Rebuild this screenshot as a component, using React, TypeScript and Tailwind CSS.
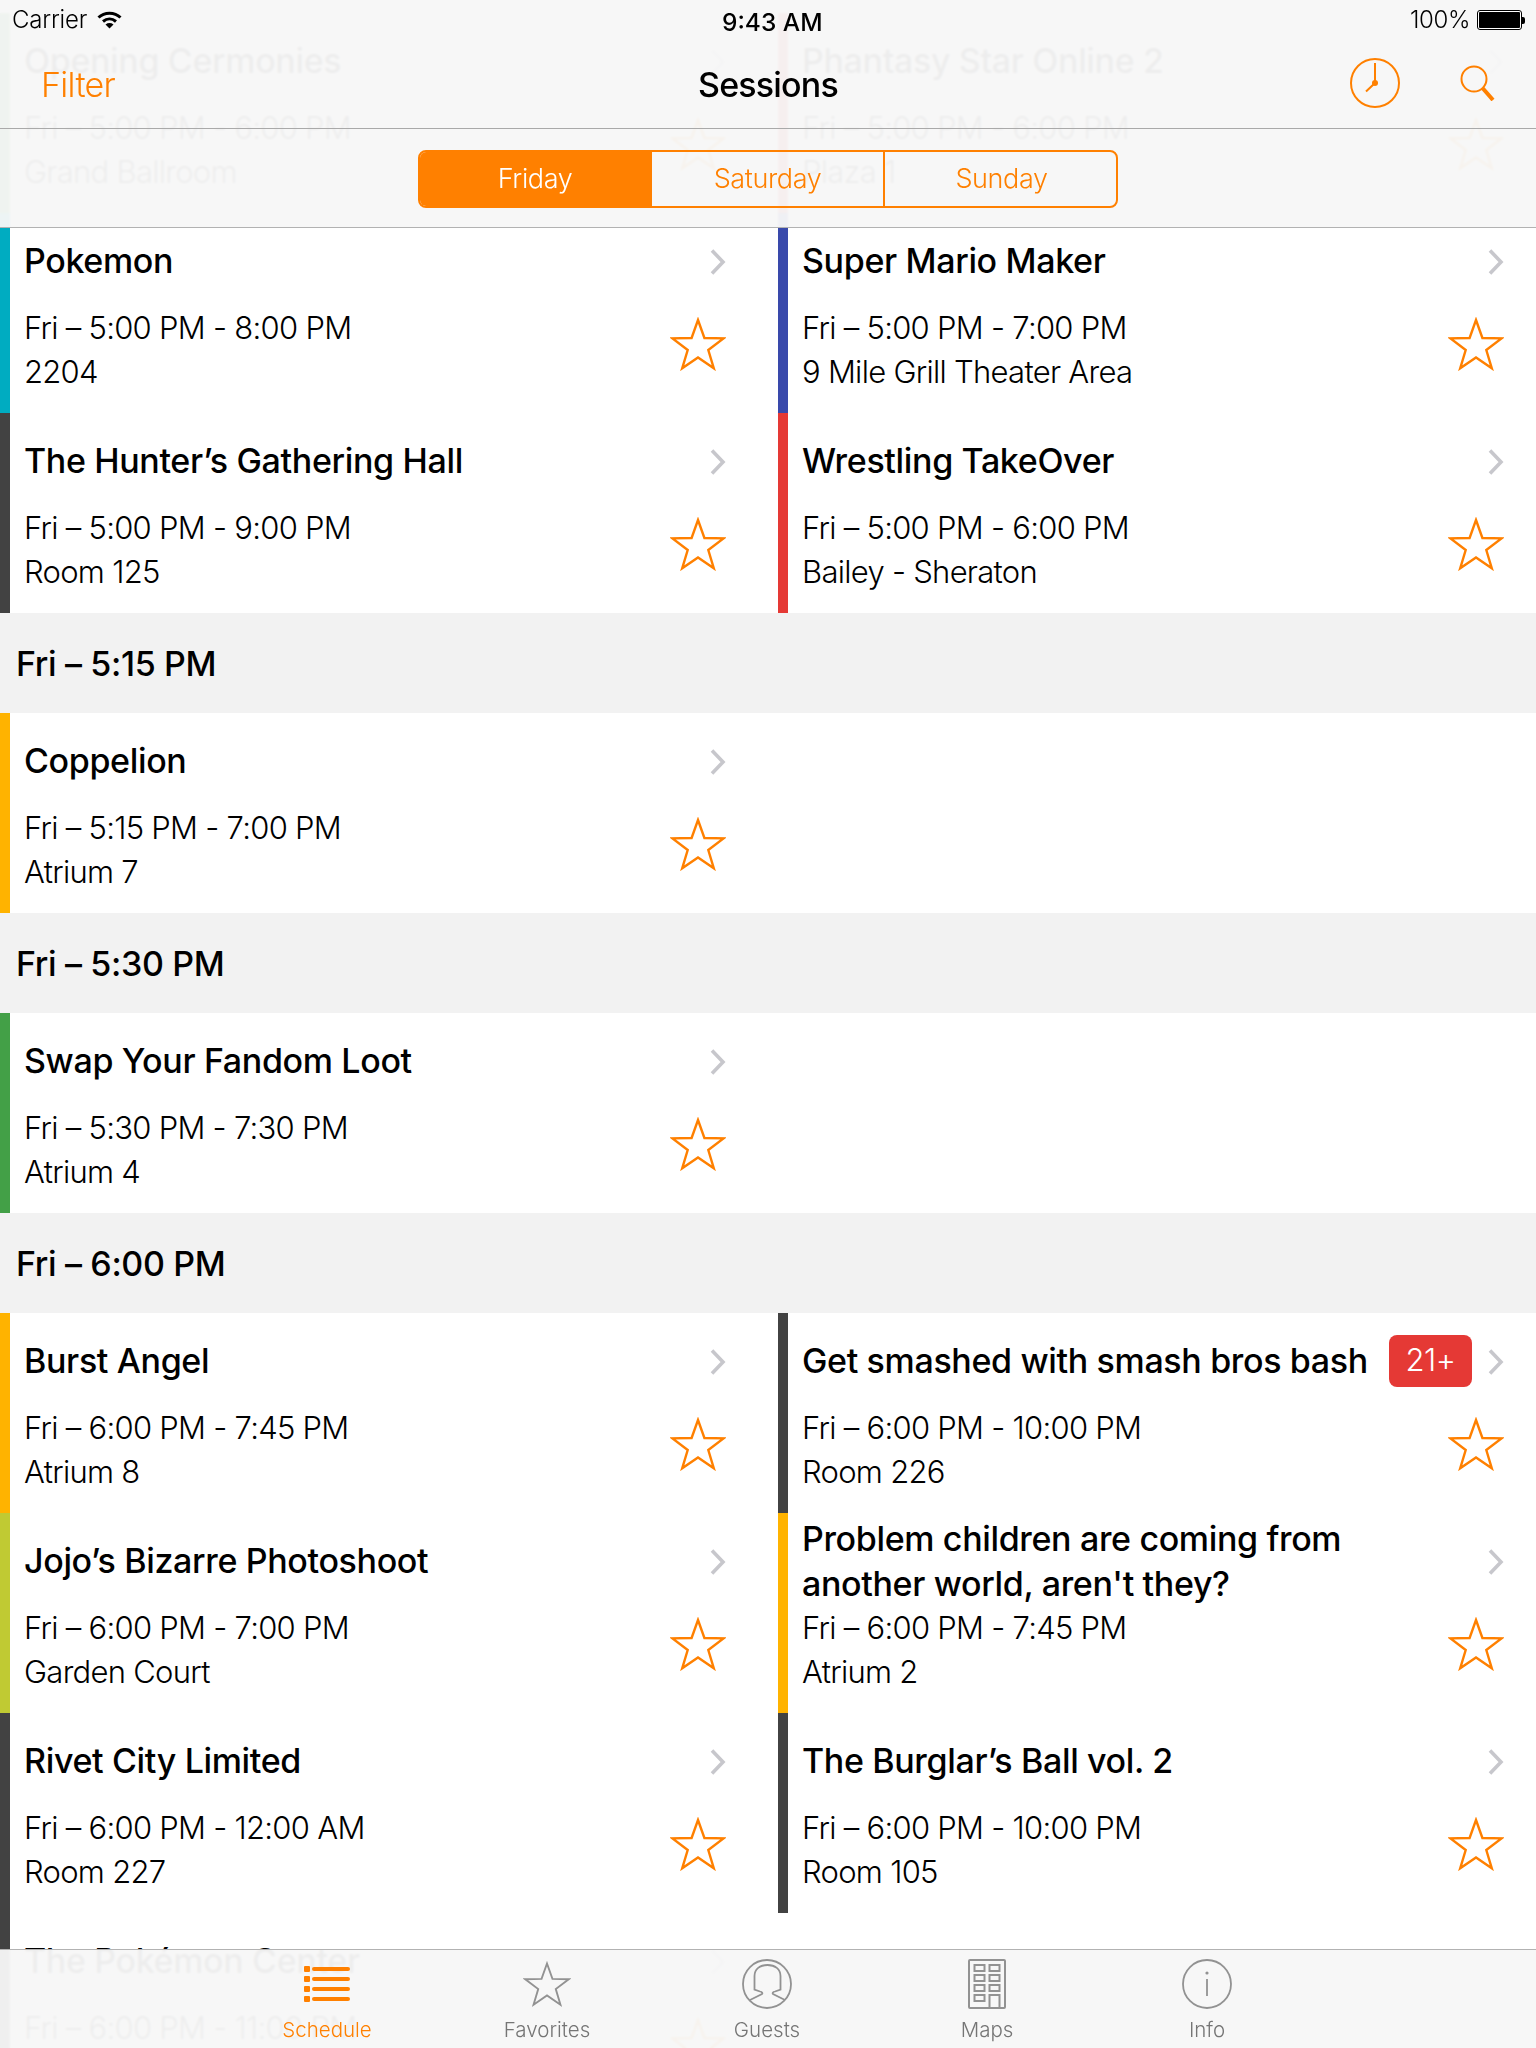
import React from 'react';

interface Session {
  title: React.ReactNode;
  time: string;
  room: string;
  bar: string;
  badge?: string;
}

type Cell = Session | null;

const font = "font-['Inter','Liberation_Sans',sans-serif]";

const StarIcon: React.FC<{ className?: string; stroke?: string; width?: number }> = ({ className, stroke = '#ff8000', width = 2.4 }) => (
  <svg viewBox="0 0 56 54" className={className} fill="none">
    <path
      d="M28 3 L34.4 21 L53.5 21.4 L38.3 33 L43.8 51.3 L28 40.5 L12.2 51.3 L17.7 33 L2.5 21.4 L21.6 21 Z"
      stroke={stroke}
      strokeWidth={width}
      strokeLinejoin="miter"
    />
  </svg>
);

const Chevron = () => (
  <svg viewBox="0 0 16 26" className="mt-[3px] h-[26px] w-[16px] shrink-0" fill="none" stroke="#c7c7cc" strokeWidth="3.6">
    <path d="M2 1.5 L13 13 L2 24.5" />
  </svg>
);

const SessionRow: React.FC<{ session: Session }> = ({ session }) => (
  <div className="flex h-[200px] bg-white">
    <div className={`w-[10px] shrink-0 ${session.bar}`} />
    <div className="flex-1 min-w-0 pl-[14px] pr-[32px] pt-[2px]">
      <div className="flex h-[91px] items-center">
        <div className="flex-1 min-w-0 text-[34px] leading-[45px] font-medium tracking-[-0.35px] text-black">{session.title}</div>
        {session.badge && (
          <div className="mr-[16px] flex h-[52px] w-[83px] items-center justify-center rounded-[8px] bg-[#e53935] text-[31px] font-light tracking-[-0.5px] text-white">
            {session.badge}
          </div>
        )}
        <Chevron />
      </div>
      <div className="flex items-start justify-between">
        <div className="text-[31px] leading-[44px] font-light tracking-[-0.72px] text-black">
          <div>{session.time}</div>
          <div>{session.room}</div>
        </div>
        <StarIcon className="mt-[11px] h-[54px] w-[56px]" />
      </div>
    </div>
  </div>
);

const SectionHeader: React.FC<{ label: string }> = ({ label }) => (
  <div className="flex h-[100px] items-center bg-[#f2f2f2] pl-[16px] text-[34px] font-medium tracking-[-0.35px] text-black">{label}</div>
);

const Grid: React.FC<{ rows: [Cell, Cell][] }> = ({ rows }) => (
  <div className="grid grid-cols-[758px_758px] gap-x-[20px]">
    {rows.flat().map((cell, i) => (cell ? <SessionRow key={i} session={cell} /> : <div key={i} className="h-[200px]" />))}
  </div>
);

const StatusBar = () => (
  <div className="flex h-[40px] items-center justify-between pl-[12px] pr-[11px] text-[24px] text-black">
    <div className="flex items-center gap-[10px] font-light tracking-[-0.2px]">
      Carrier
      <svg viewBox="0 0 25 18" className="h-[18px] w-[25px]" fill="none" stroke="#000">
        <path d="M1.5 6.5 C7.5 .8 17.5 .8 23.5 6.5" strokeWidth="3" />
        <path d="M6 10.5 C10 7 15 7 19 10.5" strokeWidth="3" />
        <path d="M8.5 13.5 C11 11.6 14 11.6 16.5 13.5 L12.5 17.5 Z" fill="#000" stroke="none" />
      </svg>
    </div>
    <div className="absolute left-[722px] top-[4px] text-[24.5px] font-medium">9:43 AM</div>
    <div className="flex items-center gap-[7px] font-light tracking-[-0.4px]">
      100%
      <div className="flex items-center">
        <div className="h-[20px] w-[45px] rounded-[3px] border border-black bg-white p-[1px]">
          <div className="h-full w-full rounded-[1px] bg-black" />
        </div>
        <div className="h-[7px] w-[3px] rounded-r-[2px] bg-black" />
      </div>
    </div>
  </div>
);

const ClockIcon = () => (
  <svg viewBox="0 0 50 50" className="h-[50px] w-[50px]" fill="none" stroke="#ff8000">
    <circle cx="25" cy="25" r="24" strokeWidth="2" />
    <path d="M25 5 V25 L16 33.5" strokeWidth="2" />
    <circle cx="25" cy="25" r="3" fill="#ff8000" stroke="none" />
  </svg>
);

const SearchIcon = () => (
  <svg viewBox="0 0 36 36" className="h-[36px] w-[36px]" fill="none" stroke="#ff8000">
    <circle cx="14" cy="14" r="12.5" strokeWidth="2" />
    <path d="M22.5 23 L33 35" strokeWidth="4" />
  </svg>
);

const TopBar = () => (
  <div className="absolute inset-x-0 top-0 h-[228px] border-b border-[#b2b2b2] bg-[#f7f7f7]/[0.96] backdrop-blur-[1px]">
    <StatusBar />
    <div className="relative flex h-[89px] items-center justify-between border-b border-[#a9a9a9] pl-[41px] pr-[40px]">
      <div className="text-[34px] font-light tracking-[-0.7px] text-[#ff8000]">Filter</div>
      <div className="absolute left-0 right-0 top-[25px] text-center text-[34px] font-medium leading-[40px] tracking-[-0.8px] text-black">Sessions</div>
      <div className="-mt-[3px] flex items-center gap-[60px]">
        <ClockIcon />
        <SearchIcon />
      </div>
    </div>
    <div className="mx-auto mt-[21px] flex h-[58px] w-[700px] overflow-hidden rounded-[8px] border-[2px] border-[#ff8000] text-[27px] font-light tracking-[-0.4px] text-[#ff8000]">
      <div className="flex w-[232px] items-center justify-center bg-[#ff8000] pr-[2px] pt-[1px] text-white">Friday</div>
      <div className="flex w-[233px] items-center justify-center border-r-[2px] border-[#ff8000] pt-[1px]">Saturday</div>
      <div className="flex flex-1 items-center justify-center pl-[2px] pt-[1px]">Sunday</div>
    </div>
  </div>
);

const ScheduleIcon = () => (
  <svg viewBox="0 0 46 36" className="h-[36px] w-[46px]" fill="#ff8000">
    {[0, 10, 20, 30].map(y => (
      <g key={y}>
        <rect x="0" y={y} width="6" height="6" rx="1" />
        <rect x="8" y={y + 1} width="38" height="4" rx="2" />
      </g>
    ))}
  </svg>
);

const GuestsIcon = () => (
  <svg viewBox="0 0 50 50" className="h-[50px] w-[50px]" fill="none" stroke="#929292" strokeWidth="1.8">
    <circle cx="25" cy="25" r="24" />
    <path d="M8 41 L20 35 C21 34 20 33 18 32.5 L12.5 30.5 V17 C12.5 10 18 6 25.5 6 C33 6 38.5 10 38.5 17 V30.5 L33 32.5 C31 33 30 34 31 35 L43 41" />
  </svg>
);

const MapsIcon = () => (
  <svg viewBox="0 0 38 50" className="h-[50px] w-[38px]" fill="none" stroke="#929292" strokeWidth="2">
    <rect x="1" y="1" width="36" height="48" rx="1" />
    {[6, 16, 26].map(y => (
      <g key={y}>
        <rect x="6.5" y={y} width="10" height="6" />
        <rect x="21.5" y={y} width="10" height="6" />
      </g>
    ))}
    <rect x="6.5" y="36" width="10" height="6" />
    <path d="M21.5 49 V36 H31.5 V49" />
  </svg>
);

const InfoIcon = () => (
  <svg viewBox="0 0 50 50" className="h-[50px] w-[50px]" fill="none" stroke="#929292">
    <circle cx="25" cy="25" r="24" strokeWidth="1.8" />
    <path d="M25 20 V37" strokeWidth="1.8" />
    <circle cx="25" cy="14" r="1.6" fill="#929292" stroke="none" />
  </svg>
);

const tabs = [
  { label: 'Schedule', icon: <ScheduleIcon />, active: true },
  { label: 'Favorites', icon: <StarIcon className="h-[46px] w-[48px]" stroke="#929292" width={2.2} /> },
  { label: 'Guests', icon: <GuestsIcon /> },
  { label: 'Maps', icon: <MapsIcon /> },
  { label: 'Info', icon: <InfoIcon /> },
];

const TabBar = () => (
  <div className="absolute inset-x-0 bottom-0 h-[99px] border-t border-[#b2b2b2] bg-[#f7f7f7]/[0.96] backdrop-blur-[1px]">
    <div className="ml-[217px] flex w-[1100px]">
      {tabs.map(tab => (
        <div key={tab.label} className="flex h-[98px] w-[220px] flex-col items-center pt-[9px]">
          <div className="flex h-[50px] items-center justify-center">{tab.icon}</div>
          <div className={`mt-[9px] text-[20.5px] leading-[24px] font-light ${tab.active ? 'text-[#ff8000]' : 'text-[#757575]'}`}>{tab.label}</div>
        </div>
      ))}
    </div>
  </div>
);

const s = (title: React.ReactNode, time: string, room: string, bar: string, badge?: string): Session => ({ title, time, room, bar, badge });

export default function App() {
  return (
    <div className={`relative h-[2048px] w-[1536px] overflow-hidden bg-white ${font}`}>
      <div className="pt-[13px]">
        <Grid
          rows={[
            [s('Opening Cermonies', 'Fri – 5:00 PM - 6:00 PM', 'Grand Ballroom', 'bg-[#43a047]'), s('Phantasy Star Online 2', 'Fri – 5:00 PM - 6:00 PM', 'Plaza 1', 'bg-[#e53935]')],
            [s('Pokemon', 'Fri – 5:00 PM - 8:00 PM', '2204', 'bg-[#00acc1]'), s('Super Mario Maker', 'Fri – 5:00 PM - 7:00 PM', '9 Mile Grill Theater Area', 'bg-[#3949ab]')],
            [s('The Hunter’s Gathering Hall', 'Fri – 5:00 PM - 9:00 PM', 'Room 125', 'bg-[#424242]'), s('Wrestling TakeOver', 'Fri – 5:00 PM - 6:00 PM', 'Bailey - Sheraton', 'bg-[#e53935]')],
          ]}
        />
        <SectionHeader label="Fri – 5:15 PM" />
        <Grid rows={[[s('Coppelion', 'Fri – 5:15 PM - 7:00 PM', 'Atrium 7', 'bg-[#ffb300]'), null]]} />
        <SectionHeader label="Fri – 5:30 PM" />
        <Grid rows={[[s('Swap Your Fandom Loot', 'Fri – 5:30 PM - 7:30 PM', 'Atrium 4', 'bg-[#43a047]'), null]]} />
        <SectionHeader label="Fri – 6:00 PM" />
        <Grid
          rows={[
            [s('Burst Angel', 'Fri – 6:00 PM - 7:45 PM', 'Atrium 8', 'bg-[#ffb300]'), s('Get smashed with smash bros bash', 'Fri – 6:00 PM - 10:00 PM', 'Room 226', 'bg-[#424242]', '21+')],
            [s('Jojo’s Bizarre Photoshoot', 'Fri – 6:00 PM - 7:00 PM', 'Garden Court', 'bg-[#c0ca33]'), s(<>Problem children are coming from<br />another world, aren't they?</>, 'Fri – 6:00 PM - 7:45 PM', 'Atrium 2', 'bg-[#ffb300]')],
            [s('Rivet City Limited', 'Fri – 6:00 PM - 12:00 AM', 'Room 227', 'bg-[#424242]'), s('The Burglar’s Ball vol. 2', 'Fri – 6:00 PM - 10:00 PM', 'Room 105', 'bg-[#424242]')],
            [s('The Pokémon Center', 'Fri – 6:00 PM - 11:00 PM', 'Room 101', 'bg-[#424242]'), null],
          ]}
        />
      </div>
      <TopBar />
      <TabBar />
    </div>
  );
}
